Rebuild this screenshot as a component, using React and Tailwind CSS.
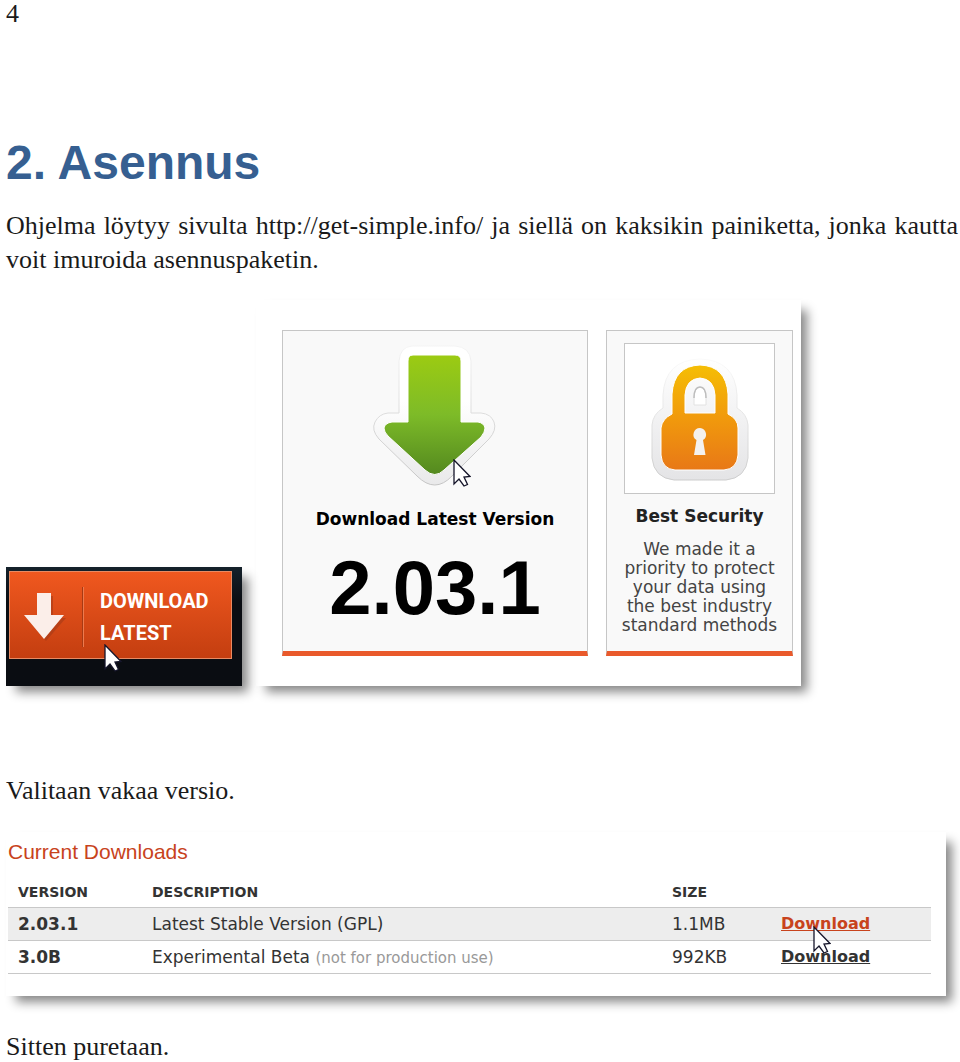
import React from 'react';

const downloads = [
  {
    version: '2.03.1',
    description: 'Latest Stable Version (GPL)',
    note: '',
    size: '1.1MB',
    active: true,
  },
  {
    version: '3.0B',
    description: 'Experimental Beta',
    note: '(not for production use)',
    size: '992KB',
    active: false,
  },
];

const Cursor = ({ className }) => (
  <svg className={className} width="18" height="28" viewBox="0 0 18 28" aria-hidden="true">
    <path
      d="M1 1 L1 25 L6 20 L11 27 L14.500 25.500 L11 18 L17 17.500 Z"
      fill="#fff"
      stroke="#15152a"
      strokeWidth="1.300"
    />
  </svg>
);

const GreenArrow = () => (
  <svg width="126" height="146" viewBox="372 343 126 146" aria-hidden="true">
    <defs>
      <linearGradient id="green" x1="0" y1="0" x2="0" y2="1">
        <stop offset="0" stopColor="#9ccb12" />
        <stop offset="0.5" stopColor="#7dbb28" />
        <stop offset="1" stopColor="#54891f" />
      </linearGradient>
      <linearGradient id="rim" x1="0" y1="0" x2="0" y2="1">
        <stop offset="0" stopColor="#ffffff" />
        <stop offset="0.4" stopColor="#ffffff" />
        <stop offset="1" stopColor="#e9e9ea" />
      </linearGradient>
      <linearGradient id="rimEdge" x1="0" y1="0" x2="0" y2="1">
        <stop offset="0" stopColor="#f4f4f4" />
        <stop offset="1" stopColor="#c4c4c4" />
      </linearGradient>
    </defs>
    <path
      d="M412 346h43q15 1 16 15v52h10q10 1 13 9t-5 17l-37 37q-17 18-35 0l-38-37q-8-9-4-17t13-9h11v-52q1-14 13-15z"
      fill="url(#rim)"
      stroke="url(#rimEdge)"
    />
    <path
      d="M413 355h42q6 0 6 6v61h17q6 1 7 6 0 4-4 9l-37 33q-9 9-19 0l-37-34q-4-4-4-8 1-5 8-6h16v-61q0-6 5-6z"
      fill="url(#green)"
      stroke="#ffffff"
    />
  </svg>
);

const Padlock = () => (
  <svg width="100" height="126" viewBox="649 355 100 126" aria-hidden="true">
    <defs>
      <linearGradient id="orange" x1="0" y1="0" x2="0" y2="1">
        <stop offset="0" stopColor="#f5be05" />
        <stop offset="0.5" stopColor="#f19a0c" />
        <stop offset="1" stopColor="#e87817" />
      </linearGradient>
      <linearGradient id="lockRim" x1="0" y1="0" x2="0" y2="1">
        <stop offset="0" stopColor="#ffffff" />
        <stop offset="1" stopColor="#e4e4e6" />
      </linearGradient>
      <linearGradient id="lockEdge" x1="0" y1="0" x2="0" y2="1">
        <stop offset="0" stopColor="#fafafa" />
        <stop offset="1" stopColor="#cccccc" />
      </linearGradient>
    </defs>
    <path
      d="M662 407v-13q2-35 37-36 35 1 37 36v13q10 6 11 17v33q-2 20-22 22h-52q-20-2-22-22v-33q1-11 11-17z"
      fill="url(#lockRim)"
      stroke="url(#lockEdge)"
    />
    <path
      fillRule="evenodd"
      d="M671 413v-20q2-28 28-29 26 1 28 29v20q10 5 10 14v27q-1 14-14 15h-49q-13-1-14-15v-27q1-9 11-14zM684 412h30v-18q-1-16-15-17-14 1-15 17z"
      fill="url(#orange)"
      stroke="#ffffff"
    />
    <path d="M693 404v-9q1-9 6-9t6 9v9z" fill="#fff" stroke="#e2e2e2" />
    <path d="M693 397q0-11 6-11t6 11" fill="none" stroke="#bdbdbd" strokeWidth="1.500" />
    <path d="M699 427a6.500 6.500 0 0 1 3 12l2.500 15h-11.500l2.500-15a6.500 6.500 0 0 1 3.500-12z" fill="#f4f1ee" />
  </svg>
);

const DownloadButton = () => (
  <div className="relative w-[236px] shrink-0 bg-linear-to-b from-[#15212b] to-[#0a0d12] to-30% pt-1 pr-[10px] pb-[27px] pl-[3px] shadow-[8px_8px_10px_-2px_#888]">
    <button
      type="button"
      className="flex h-[88px] w-full cursor-pointer items-center border border-[#e88a62] bg-linear-to-b from-[#f0581f] to-[#c43e10] pt-1 pl-[14px] text-left"
    >
      <svg width="42" height="50" viewBox="0 0 42 50" aria-hidden="true">
        <path d="M15 4h14v22h13L22 49 3 26h12z" fill="#a53b17" opacity="0.6" />
        <path d="M13 1h14v22h13L20 47 0 23h13z" fill="#fbeee9" />
      </svg>
      <span className="ml-4 h-[60px] w-[2px] border-l border-[#a83a14] bg-[#ee7a4d]" />
      <span className="ml-4 font-[Roboto,'Liberation_Sans',sans-serif] text-[20px] leading-8 font-bold text-white">
        DOWNLOAD
        <br />
        LATEST
      </span>
    </button>
    <Cursor className="absolute top-[77px] left-[98px]" />
  </div>
);

const FeatureCards = () => (
  <div className="flex h-[386px] shrink-0 gap-[18px] bg-white pt-[30px] pr-2 pb-[30px] pl-[26px] shadow-[8px_8px_10px_-2px_#888]">
    <section className="flex w-[306px] flex-col items-center border border-b-[5px] border-[#c6c6c6] border-b-[#e9592b] bg-[#f9f9f9] pt-3">
      <div className="relative">
        <GreenArrow />
        <Cursor className="absolute top-[116px] left-[81px]" />
      </div>
      <h2 className="mt-[18px] font-['DejaVu_Sans',sans-serif] text-[17px] leading-6 font-bold text-black">
        Download Latest Version
      </h2>
      <p className="mt-3 font-['Liberation_Sans',sans-serif] text-[76px] leading-[90px] font-bold text-black">
        2.03.1
      </p>
    </section>
    <section className="flex w-[187px] flex-col items-center border border-b-[5px] border-[#c6c6c6] border-b-[#e9592b] bg-[#f9f9f9] pt-3">
      <div className="flex size-[151px] items-center justify-center border border-[#c6c6c6] bg-white">
        <Padlock />
      </div>
      <h2 className="mt-[10px] font-['DejaVu_Sans',sans-serif] text-[17px] leading-6 font-bold text-[#222]">
        Best Security
      </h2>
      <p className="mt-3 text-center font-['DejaVu_Sans',sans-serif] text-[17px] leading-[19px] text-[#444]">
        We made it a
        <br />
        priority to protect
        <br />
        your data using
        <br />
        the best industry
        <br />
        standard methods
      </p>
    </section>
  </div>
);

const DownloadsTable = () => (
  <div className="mt-[26px] mr-3 h-[164px] bg-white pt-2 pr-[15px] pl-[2px] shadow-[8px_8px_10px_-2px_#888]">
    <h2 className="font-['Liberation_Sans',sans-serif] text-[21px] leading-6 text-[#c8431c]">Current Downloads</h2>
    <table className="mt-[13px] w-full table-fixed border-collapse text-left font-['DejaVu_Sans',sans-serif] text-[17px] text-[#333]">
      <colgroup>
        <col className="w-[134px]" />
        <col />
        <col className="w-[109px]" />
        <col className="w-[160px]" />
      </colgroup>
      <thead>
        <tr className="h-[30px] border-b border-[#c8c8c8] text-[14px]">
          <th className="pl-[10px]">VERSION</th>
          <th className="pl-[10px]">DESCRIPTION</th>
          <th className="pl-[10px]">SIZE</th>
          <th></th>
        </tr>
      </thead>
      <tbody>
        {downloads.map((item) => (
          <tr key={item.version} className="h-[33px] border-b border-[#c8c8c8] odd:bg-[#ededed]">
            <td className="pl-[10px] font-bold">{item.version}</td>
            <td className="pl-[10px]">
              {item.description} {item.note && <span className="text-[15px] text-[#999]">{item.note}</span>}
            </td>
            <td className="pl-[10px]">{item.size}</td>
            <td className="pl-[10px] text-base font-bold">
              <span className="relative">
                <a href="#download" className={item.active ? 'text-[#c8431c] underline' : 'underline'}>
                  Download
                </a>
                {item.active && <Cursor className="absolute top-3 left-8" />}
              </span>
            </td>
          </tr>
        ))}
      </tbody>
    </table>
  </div>
);

const App = () => {
  return (
    <main className="bg-white pr-[2px] pl-[6px] font-['Liberation_Serif',serif] text-[26px] leading-[30px] text-[#1a1a1a]">
      <p className="leading-7">4</p>
      <h1 className="mt-[109px] font-['Liberation_Sans',sans-serif] text-[48px] leading-[52px] font-bold text-[#365f91]">
        2. Asennus
      </h1>
      <p className="mt-5 text-justify leading-[34px]">
        Ohjelma löytyy sivulta http://get-simple.info/ ja siellä on kaksikin painiketta, jonka kautta voit imuroida
        asennuspaketin.
      </p>
      <div className="mt-[23px] flex items-end gap-[14px]">
        <DownloadButton />
        <FeatureCards />
      </div>
      <p className="mt-[90px]">Valitaan vakaa versio.</p>
      <DownloadsTable />
      <p className="mt-9">Sitten puretaan.</p>
    </main>
  );
};

export default App;
